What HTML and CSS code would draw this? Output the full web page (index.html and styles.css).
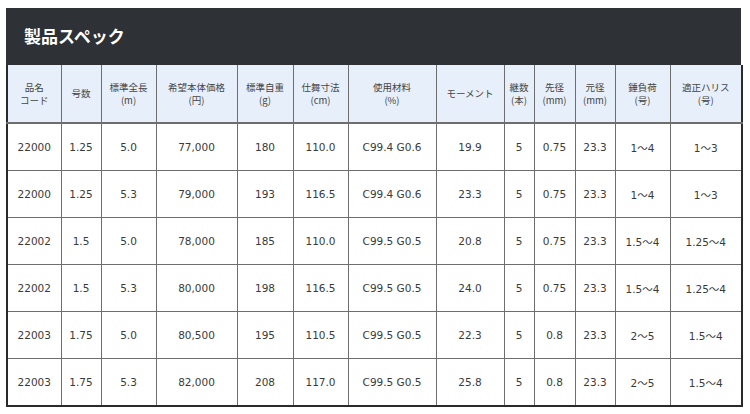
FILE: index.html
```html
<!DOCTYPE html>
<html lang="ja">
<head>
<meta charset="utf-8">
<link rel="stylesheet" href="styles.css">
</head>
<body>
<div class="spec">
  <div class="spec-head"><h2 class="spec-title">製品スペック</h2></div>
  <table class="spec-table">
    <colgroup>
      <col class="c1"><col class="c2"><col class="c3"><col class="c4"><col class="c5"><col class="c6"><col class="c7"><col class="c8"><col class="c9"><col class="c10"><col class="c11"><col class="c12"><col class="c13">
    </colgroup>
    <thead>
      <tr>
        <th>品名<br>コード</th>
        <th>号数</th>
        <th>標準全長<br>(m)</th>
        <th>希望本体価格<br>(円)</th>
        <th>標準自重<br>(g)</th>
        <th>仕舞寸法<br>(cm)</th>
        <th>使用材料<br>(%)</th>
        <th>モーメント</th>
        <th>継数<br>(本)</th>
        <th>先径<br>(mm)</th>
        <th>元径<br>(mm)</th>
        <th>錘負荷<br>(号)</th>
        <th>適正ハリス<br>(号)</th>
      </tr>
    </thead>
    <tbody>
      <tr><td>22000</td><td>1.25</td><td>5.0</td><td>77,000</td><td>180</td><td>110.0</td><td>C99.4 G0.6</td><td>19.9</td><td>5</td><td>0.75</td><td>23.3</td><td>1～4</td><td>1～3</td></tr>
      <tr><td>22000</td><td>1.25</td><td>5.3</td><td>79,000</td><td>193</td><td>116.5</td><td>C99.4 G0.6</td><td>23.3</td><td>5</td><td>0.75</td><td>23.3</td><td>1～4</td><td>1～3</td></tr>
      <tr><td>22002</td><td>1.5</td><td>5.0</td><td>78,000</td><td>185</td><td>110.0</td><td>C99.5 G0.5</td><td>20.8</td><td>5</td><td>0.75</td><td>23.3</td><td>1.5～4</td><td>1.25～4</td></tr>
      <tr><td>22002</td><td>1.5</td><td>5.3</td><td>80,000</td><td>198</td><td>116.5</td><td>C99.5 G0.5</td><td>24.0</td><td>5</td><td>0.75</td><td>23.3</td><td>1.5～4</td><td>1.25～4</td></tr>
      <tr><td>22003</td><td>1.75</td><td>5.0</td><td>80,500</td><td>195</td><td>110.5</td><td>C99.5 G0.5</td><td>22.3</td><td>5</td><td>0.8</td><td>23.3</td><td>2～5</td><td>1.5～4</td></tr>
      <tr><td>22003</td><td>1.75</td><td>5.3</td><td>82,000</td><td>208</td><td>117.0</td><td>C99.5 G0.5</td><td>25.8</td><td>5</td><td>0.8</td><td>23.3</td><td>2～5</td><td>1.5～4</td></tr>
    </tbody>
  </table>
</div>
</body>
</html>
```
FILE: styles.css
```css
html, body {
  margin: 0;
  padding: 0;
  background: #ffffff;
}
body {
  padding: 8px 9px 0 6px;
  font-family: "DejaVu Sans", Verdana, "Noto Sans CJK JP", sans-serif;
  color: #333;
}
.spec {
  width: 735px;
}
.spec-head {
  background: #2e3135;
  height: 57px;
  display: flex;
  align-items: center;
  padding-left: 18px;
  box-sizing: border-box;
}
.spec-title {
  margin: 0;
  color: #fff;
  font-family: "Noto Sans CJK JP", sans-serif;
  font-size: 17px;
  font-weight: 700;
  padding-bottom: 2px;
}
.spec-table {
  width: 735px;
  border-collapse: collapse;
  table-layout: fixed;
  border: 2px solid #2a2a2a;
  border-top: 0;
}
.c1 { width: 54px; }
.c2 { width: 40px; }
.c3 { width: 55px; }
.c4 { width: 81px; }
.c5 { width: 56px; }
.c6 { width: 55px; }
.c7 { width: 88px; }
.c8 { width: 68px; }
.c9 { width: 30px; }
.c10 { width: 41px; }
.c11 { width: 40px; }
.c12 { width: 55px; }
.c13 { width: 72px; }
.spec-table th,
.spec-table td {
  border: 1px solid #6e6e6e;
  text-align: center;
  vertical-align: middle;
  padding: 0;
  white-space: nowrap;
  overflow: hidden;
}
.spec-table th {
  background: #e7effa;
  height: 57px;
  font-family: "Noto Sans CJK JP", sans-serif;
  font-weight: 400;
  font-size: 9.5px;
  line-height: 13px;
  color: #444;
  border-top: 0;
  border-bottom: 2px solid #6e6e6e;
}
.spec-table td {
  height: 46px;
  font-size: 10.5px;
  color: #3a3a3a;
  background: #fff;
}
.spec-table tr > :first-child { border-left: 2px solid #2a2a2a; }
.spec-table tr > :last-child { border-right: 2px solid #2a2a2a; }
.spec-table tbody tr:last-child td { border-bottom: 2px solid #2a2a2a; }
```
